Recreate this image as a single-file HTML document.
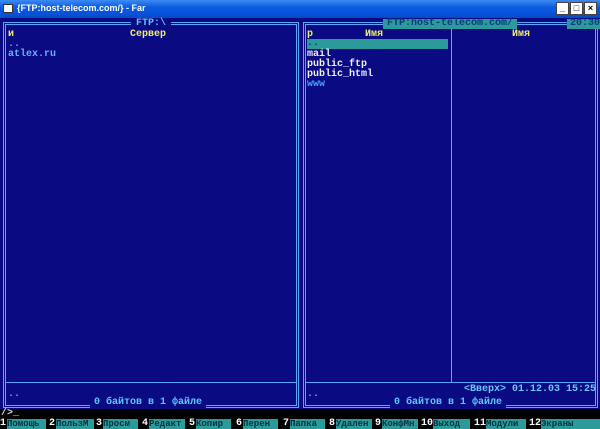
<!DOCTYPE html>
<html><head><meta charset="utf-8"><style>
*{margin:0;padding:0;box-sizing:border-box}
body{width:600px;height:429px;overflow:hidden;background:#000;position:relative;font-family:"Liberation Mono",monospace;}
#tb{position:absolute;left:0;top:0;width:600px;height:18px;background:linear-gradient(#3d8af5,#0a5ce0 40%,#0551d8 80%,#0a48c0);}
#tb .tt{position:absolute;left:17px;top:3px;font:bold 9px "Liberation Sans",sans-serif;color:#fff}
#tb .ic{position:absolute;left:3px;top:4px;width:10px;height:9px;background:#fff;border:1px solid #333}
.btn{position:absolute;top:2px;width:13px;height:13px;background:#fff;border:1px solid #444;font:bold 9px "Liberation Sans",sans-serif;color:#000;text-align:center;line-height:11px}
#con{position:absolute;left:0;top:18px;width:600px;height:391px;background:#0a0a82}
.box{position:absolute;border:3px double #5aa6ff}
.t{position:absolute;font-size:10px;font-weight:bold;line-height:10px;white-space:pre}
.k{overflow:hidden;font-size:9px}
.ln{position:absolute;background:#5aa6ff}
</style></head><body>
<div id="tb"><div class="ic"></div><div class="tt">{FTP:host-telecom.com/} - Far</div>
<div class="btn" style="left:556px">_</div><div class="btn" style="left:570px">□</div><div class="btn" style="left:584px">×</div></div>
<div id="con"></div>
<div class="box" style="left:3px;top:22px;width:296px;height:386px"></div>
<div class="box" style="left:303px;top:22px;width:295px;height:386px"></div>
<div class="ln" style="left:6px;top:382px;width:290px;height:1px"></div>
<div class="ln" style="left:306px;top:382px;width:289px;height:1px"></div>
<div class="ln" style="left:451px;top:25px;width:1px;height:357px"></div>
<div class="t" style="left:131px;top:19px;background:#0a0a82;color:#5ac8ff;padding:0 5px">FTP:\</div>
<div class="t" style="left:383px;top:19px;width:134px;background:#2a9a9a;color:#0a3a80;padding:0 4px">FTP:host-telecom.com/</div>
<div class="t" style="left:567px;top:19px;background:#2a9a9a;color:#0a3a80;width:33px;padding-left:3px">20:30</div>
<div class="t" style="left:8px;top:30px;color:#f0f070">и</div>
<div class="t" style="left:130px;top:30px;color:#f0f070">Сервер</div>
<div class="t" style="left:8px;top:40px;color:#6ab0ff">..</div>
<div class="t" style="left:8px;top:50px;color:#6ab0ff">atlex.ru</div>
<div class="t" style="left:307px;top:30px;color:#f0f070">р</div>
<div class="t" style="left:365px;top:30px;color:#f0f070">Имя</div>
<div class="t" style="left:512px;top:30px;color:#f0f070">Имя</div>
<div class="t" style="left:307px;top:39px;width:141px;height:10px;background:#2a9a9a;color:#0a3a80">..</div>
<div class="t" style="left:307px;top:50px;color:#f0f0ff">mail</div>
<div class="t" style="left:307px;top:60px;color:#f0f0ff">public_ftp</div>
<div class="t" style="left:307px;top:70px;color:#f0f0ff">public_html</div>
<div class="t" style="left:307px;top:80px;color:#4aa0ff">www</div>
<div class="t" style="left:8px;top:390px;color:#6ab0ff">..</div>
<div class="t" style="left:307px;top:390px;color:#6ab0ff">..</div>
<div class="t" style="left:464px;top:385px;color:#6ac8ff">&lt;Вверх&gt; 01.12.03 15:25</div>
<div class="t" style="left:90px;top:398px;background:#0a0a82;color:#5ac8ff;padding:0 4px">0 байтов в 1 файле</div>
<div class="t" style="left:390px;top:398px;background:#0a0a82;color:#5ac8ff;padding:0 4px">0 байтов в 1 файле</div>
<div class="t" style="left:1px;top:409px;color:#ddd">/&gt;_</div>
<div style="position:absolute;left:0;top:419px;width:600px;height:10px">
<div class="t" style="left:0;color:#fff">1</div><div class="t k" style="left:7px;width:39px;background:#2a9a9a;color:#034">Помощь</div>
<div class="t" style="left:49px;color:#fff">2</div><div class="t k" style="left:56px;width:38px;background:#2a9a9a;color:#034">ПользМ</div>
<div class="t" style="left:96px;color:#fff">3</div><div class="t k" style="left:103px;width:35px;background:#2a9a9a;color:#034">Просм</div>
<div class="t" style="left:142px;color:#fff">4</div><div class="t k" style="left:149px;width:36px;background:#2a9a9a;color:#034">Редакт</div>
<div class="t" style="left:189px;color:#fff">5</div><div class="t k" style="left:196px;width:35px;background:#2a9a9a;color:#034">Копир</div>
<div class="t" style="left:236px;color:#fff">6</div><div class="t k" style="left:243px;width:35px;background:#2a9a9a;color:#034">Перен</div>
<div class="t" style="left:283px;color:#fff">7</div><div class="t k" style="left:290px;width:35px;background:#2a9a9a;color:#034">Папка</div>
<div class="t" style="left:329px;color:#fff">8</div><div class="t k" style="left:336px;width:36px;background:#2a9a9a;color:#034">Удален</div>
<div class="t" style="left:375px;color:#fff">9</div><div class="t k" style="left:382px;width:36px;background:#2a9a9a;color:#034">КонфМн</div>
<div class="t" style="left:421px;color:#fff">10</div><div class="t k" style="left:433px;width:37px;background:#2a9a9a;color:#034">Выход</div>
<div class="t" style="left:474px;color:#fff">11</div><div class="t k" style="left:486px;width:40px;background:#2a9a9a;color:#034">Модули</div>
<div class="t" style="left:529px;color:#fff">12</div><div class="t k" style="left:541px;width:59px;background:#2a9a9a;color:#034">Экраны</div>
</div>
</body></html>
